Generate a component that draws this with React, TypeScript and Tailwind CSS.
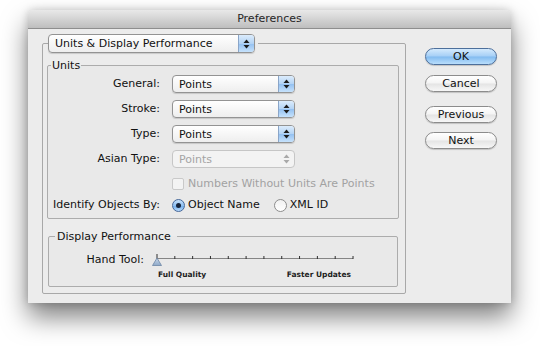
import React from "react"

function Arrows({ disabled }: { disabled?: boolean }) {
    return (
        <svg width="7" height="10" viewBox="0 0 7 10">
            <polygon points="0.5,4 3.5,0.5 6.5,4" fill={disabled ? "#a9a9a9" : "#1c1c1c"} />
            <polygon points="0.5,6 3.5,9.5 6.5,6" fill={disabled ? "#a9a9a9" : "#1c1c1c"} />
        </svg>
    )
}

function Popup({ label, wide, disabled }: { label: string; wide?: boolean; disabled?: boolean }) {
    if (disabled) {
        return (
            <div className="flex h-[18px] w-[123px] overflow-hidden rounded-[4px] border border-[#c6c6c6] bg-[#f3f3f3]">
                <span className="flex flex-1 items-center pl-[6px] leading-none text-[#a4a4a4]">{label}</span>
                <span className="flex w-[16px] items-center justify-center">
                    <Arrows disabled />
                </span>
            </div>
        )
    }
    return (
        <div className={`flex overflow-hidden rounded-[4px] border border-[#939393] bg-linear-to-b from-white to-[#eeeeee] shadow-[0_1px_1px_rgba(0,0,0,0.15)] ${wide ? "h-[19px] w-[207px]" : "h-[18px] w-[123px]"}`}>
            <span className={`flex flex-1 items-center leading-none ${wide ? "pl-[6px]" : "pl-[6px]"}`}>{label}</span>
            <span className="flex w-[16px] items-center justify-center border-l border-[#8aa5c8] bg-[linear-gradient(to_bottom,#dcecfc_0%,#b2d3f5_50%,#93c0f1_51%,#c6e2fc_100%)]">
                <Arrows />
            </span>
        </div>
    )
}

function Button({ label, primary }: { label: string; primary?: boolean }) {
    return (
        <div
            className={`flex h-[17px] w-[72px] items-center justify-center rounded-full border leading-none shadow-[0_1px_1px_rgba(0,0,0,0.18)] ${
                primary
                    ? "border-[#4d6f9b] bg-[linear-gradient(to_bottom,#d4eafd_0%,#a6cff6_48%,#82bbf0_52%,#b9defc_100%)]"
                    : "border-[#8c8c8c] bg-[linear-gradient(to_bottom,#ffffff_0%,#f4f4f4_48%,#e4e4e4_52%,#f7f7f7_100%)]"
            }`}
        >
            {label}
        </div>
    )
}

function Row({ label, children }: { label: string; children: React.ReactNode }) {
    return (
        <div className="flex h-[18px] items-center">
            <span className="w-[112px] text-right whitespace-nowrap">{label}</span>
            <div className="ml-[12px] flex items-center">{children}</div>
        </div>
    )
}

function Slider() {
    const ticks = Array.from({ length: 12 }, (_, i) => 7 + i * 17.82)
    return (
        <svg width="210" height="20" viewBox="0 0 210 20" className="ml-[6px]">
            <defs>
                <linearGradient id="thumb" x1="0" y1="0" x2="0" y2="1">
                    <stop offset="0" stopColor="#c9d8ea" />
                    <stop offset="1" stopColor="#8ea8c8" />
                </linearGradient>
            </defs>
            <line x1="7" y1="8.5" x2="203" y2="8.5" stroke="#858585" strokeWidth="1" />
            {ticks.map((x, i) => (
                <line key={i} x1={x} y1={i === 0 ? 4 : 6} x2={x} y2="9" stroke="#2e2e2e" strokeWidth="1" />
            ))}
            <polygon points="7,8 2.5,15.5 11.5,15.5" fill="url(#thumb)" stroke="#6d86a6" strokeWidth="0.8" />
        </svg>
    )
}

export default function App() {
    return (
        <div className="h-[346px] w-[540px] bg-white pl-[28px] pt-[10px] font-['DejaVu_Sans',sans-serif] text-[11px] text-[#111]">
            <div className="flex h-[293px] w-[483px] flex-col rounded-t-[5px] bg-[#ececec] shadow-[0_14px_26px_rgba(0,0,0,0.5),0_0_8px_rgba(0,0,0,0.18)]">
                {/* title bar */}
                <div className="flex h-[19px] items-center justify-center rounded-t-[5px] border-b border-[#8e8e8e] bg-linear-to-b from-[#e9e9e9] to-[#bebebe] text-[#262626]">
                    Preferences
                </div>

                <div className="flex flex-1 items-start">
                    {/* main group */}
                    <fieldset className="ml-[14px] mt-[5px] w-[364px] rounded-[2px] border border-[#a8a8a8] px-[4px] pb-[6px]">
                        <legend className="ml-[1px] pr-[3px]">
                            <Popup label="Units & Display Performance" wide />
                        </legend>

                        {/* Units */}
                        <fieldset className="mt-[6px] w-[352px] rounded-[2px] border border-[#acacac] bg-[#e9e9e9] pb-[5px]">
                            <legend className="ml-[3px] px-[1px] leading-[13px]">Units</legend>
                            <div className="flex flex-col gap-[7px] pt-[3px]">
                                <Row label="General:">
                                    <Popup label="Points" />
                                </Row>
                                <Row label="Stroke:">
                                    <Popup label="Points" />
                                </Row>
                                <Row label="Type:">
                                    <Popup label="Points" />
                                </Row>
                                <Row label="Asian Type:">
                                    <Popup label="Points" disabled />
                                </Row>
                                <div className="flex h-[18px] items-center pl-[124px]">
                                    <span className="h-[12px] w-[12px] rounded-[2px] border border-[#c9c9c9] bg-[#f3f3f3]" />
                                    <span className="ml-[4px] text-[#a2a2a2]">Numbers Without Units Are Points</span>
                                </div>
                            </div>
                            <div className="mt-[4px] flex h-[16px] items-center">
                                <span className="w-[112px] text-right whitespace-nowrap">Identify Objects By:</span>
                                <span className="ml-[12px] flex h-[13px] w-[13px] items-center justify-center rounded-full border border-[#46689a] bg-[linear-gradient(to_bottom,#c8e2fb_0%,#8fc0f2_50%,#6eaaea_51%,#b7dafc_100%)]">
                                    <span className="h-[5px] w-[5px] rounded-full bg-[#17243b]" />
                                </span>
                                <span className="ml-[3px]">Object Name</span>
                                <span className="ml-[14px] h-[13px] w-[13px] rounded-full border border-[#8d8d8d] bg-linear-to-b from-[#f1f1f1] to-white" />
                                <span className="ml-[3px]">XML ID</span>
                            </div>
                        </fieldset>

                        {/* Display Performance */}
                        <fieldset className="ml-[1px] mt-[11px] w-[350px] rounded-[2px] border border-[#acacac] bg-[#e9e9e9] pb-[6px]">
                            <legend className="ml-[6px] pl-[2px] pr-[6px] leading-[13px]">Display Performance</legend>
                            <div className="mt-[7px] flex h-[20px] items-center">
                                <span className="w-[95px] text-right">Hand Tool:</span>
                                <Slider />
                            </div>
                            <div className="ml-[109px] flex h-[10px] w-[193px] justify-between text-[7.5px] leading-[10px] font-bold text-[#222]">
                                <span>Full Quality</span>
                                <span>Faster Updates</span>
                            </div>
                        </fieldset>
                    </fieldset>

                    {/* buttons */}
                    <div className="ml-[19px] mt-[19px] flex flex-col">
                        <Button label="OK" primary />
                        <div className="mt-[10px]">
                            <Button label="Cancel" />
                        </div>
                        <div className="mt-[14px]">
                            <Button label="Previous" />
                        </div>
                        <div className="mt-[9px]">
                            <Button label="Next" />
                        </div>
                    </div>
                </div>
            </div>
        </div>
    )
}
